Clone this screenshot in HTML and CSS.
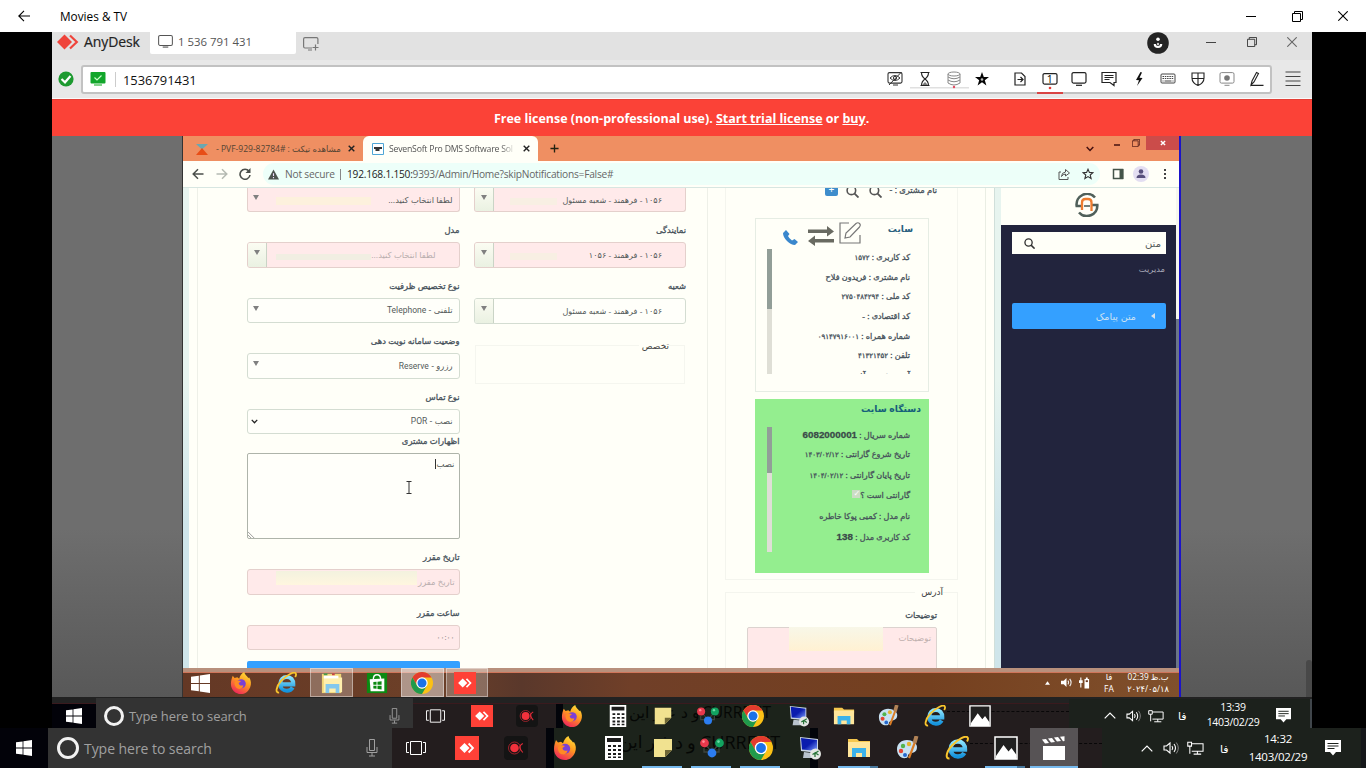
FILE: index.html
```html
<!DOCTYPE html>
<html lang="en">
<head>
<meta charset="utf-8">
<title>Movies &amp; TV</title>
<link rel="stylesheet" href="styles.css">
</head>
<body>
<svg class="defs" aria-hidden="true">
  <defs>
    <linearGradient id="gFox" x1="0.8" y1="0" x2="0.3" y2="1"><stop offset="0" stop-color="#ffe23c"/><stop offset=".45" stop-color="#ff9a1f"/><stop offset="1" stop-color="#f0245c"/></linearGradient>
    <linearGradient id="gIe" x1="0" y1="0" x2="0" y2="1"><stop offset="0" stop-color="#8be4ff"/><stop offset="1" stop-color="#1593dc"/></linearGradient>
    <linearGradient id="gScr" x1="0" y1="0" x2="1" y2="1"><stop offset="0" stop-color="#0a1cae"/><stop offset=".5" stop-color="#0a1cae"/><stop offset="1" stop-color="#7fa0ff"/></linearGradient>
  </defs>
  <symbol id="win" viewBox="0 0 16 16"><path fill="#fff" d="M0 2.3 6.6 1.4V7.6H0zM7.4 1.3 16 0V7.6H7.4zM0 8.4H6.6V14.6L0 13.7zM7.4 8.4H16V16L7.4 14.8z"/></symbol>
  <symbol id="anydesk" viewBox="0 0 24 24"><path fill="#ff4137" d="M0 0h24v24H0z"/><path fill="#fff" d="M9.5 7 14.5 12 9.5 17 4.5 12z"/><path fill="none" stroke="#fff" stroke-width="1.8" d="M13.6 7.5 18 12l-4.4 4.5"/></symbol>
  <symbol id="rec" viewBox="0 0 24 24"><rect width="24" height="24" rx="4" fill="#141414"/><circle cx="10.500" cy="12" r="6" fill="none" stroke="#b0242e" stroke-width=".9"/><circle cx="10.500" cy="12" r="4.300" fill="#f2313c"/><path d="M18.800 7.500Q15 10 15.800 12T18.800 16.500" fill="none" stroke="#e02b38" stroke-width="1.100"/></symbol>
  <symbol id="firefox" viewBox="0 0 24 24"><path fill="url(#gFox)" d="M3 4l2 2.6 3-.8 2 1.5C11 4 12.500 1.500 15.500 0c.5 3 3 4 4.500 6.500L21 6c2 3 2.500 7 1 10.500C20 21.500 16 24 12 24 6 24 1 19.500 1 13 1 9.500 2 6.500 3 4z"/><circle cx="12.200" cy="12.800" r="5" fill="#7b3fd6"/><path fill="#ff8a24" d="M5 11c2-2.500 5-2 7-1l-2.500 2c0 2 2 3.500 5 2.500 0 2-2 4.500-5.500 3.800C6 17.500 4.500 14 5 11z"/></symbol>
  <symbol id="calc" viewBox="0 0 24 24"><path fill="#fff" d="M3 0h18v24H3z"/><path fill="#1c1c1c" d="M5 2h14v4H5zM6 9h3v2H6zM11 9h3v2h-3zM16 9h3v2h-3zM6 13h3v2H6zM11 13h3v2h-3zM16 13h3v2h-3zM6 17h3v2H6zM11 17h3v2h-3zM16 17h3v2h-3zM6 20.500h3v1.500H6zM11 20.500h3v1.500h-3zM16 20.500h3v1.500h-3z"/></symbol>
  <symbol id="note" viewBox="0 0 24 24"><path fill="#f1e290" d="M3 3h18v11l-7 7H3z"/><path fill="#6e6635" d="M14 14h7l-7 7z"/></symbol>
  <symbol id="nodes" viewBox="0 0 24 24"><path fill="none" stroke="#3d443e" stroke-width="1.300" d="M4.500 7.500 12 16l7.500-8.500M4 12v4h15v-4"/><circle cx="4.500" cy="7" r="4.400" fill="#e8394c"/><circle cx="19.500" cy="7" r="4.400" fill="#12a360"/><circle cx="12" cy="17" r="4.400" fill="#2c7df0"/><circle cx="3.500" cy="5.600" r="1.300" fill="#ff8b95"/><circle cx="18.500" cy="5.600" r="1.300" fill="#6bdca5"/></symbol>
  <symbol id="chrome" viewBox="0 0 24 24"><circle cx="12" cy="12" r="12" fill="#fbc116"/><path fill="#e33b2e" d="M1.600 6A12 12 0 0 1 22.400 6H12A6 6 0 0 0 6.800 15z"/><path fill="#209a4c" d="M1.600 6A12 12 0 0 0 12 24l5.200-9A6 6 0 0 1 6.800 15z"/><circle cx="12" cy="12" r="6.200" fill="#fff"/><circle cx="12" cy="12" r="4.900" fill="#1b72e8"/></symbol>
  <symbol id="rdp" viewBox="0 0 24 24"><path fill="#c9d5e3" d="M2 1 20 3v14L3 15z"/><path fill="url(#gScr)" d="M3 2 19 4v11L4 13.500z"/><path fill="#b8c3cd" d="M6 16l8 1 2 5H5z"/><circle cx="17.500" cy="18" r="5.500" fill="#e3e6e3"/><path d="M14.500 18.500l2.500-1.500v4M20.500 15l-3 2 3 2" fill="none" stroke="#297539" stroke-width="1.300"/></symbol>
  <symbol id="folder" viewBox="0 0 24 24"><path fill="#f5c74e" d="M1 3h9l2 2h11v4H1z"/><path fill="#ffe69b" d="M1 6h22v15H1z"/><path fill="#3bb2ea" d="M5 12h14v9h-4v-4H9v4H5z"/></symbol>
  <symbol id="paint" viewBox="0 0 24 24"><path fill="#c8e1f2" d="M11 4C5 4 1 8 1 13c0 6 4 10 9 9 3-.6 1-3 3-4 3-1.500 8-1 8-7 0-4-5-7-10-7z"/><circle cx="7" cy="10" r="2.200" fill="#53b34c"/><circle cx="13" cy="8" r="2.200" fill="#e5b330"/><circle cx="5" cy="15" r="2.200" fill="#e34332"/><circle cx="9" cy="19" r="2" fill="#2467ce"/><path stroke="#d97c25" stroke-width="2.200" d="M19 6 13 22"/><path stroke="#b18256" stroke-width="4" d="M20.500 0 18.500 7"/></symbol>
  <symbol id="ie" viewBox="0 0 24 24"><path fill="none" stroke="url(#gIe)" stroke-width="4.400" d="M6.500 13.500H20c.2-5-3-8-7-8s-7.300 3-7.300 7.500S9 20.500 13 20.500c3 0 5-1.200 6.300-3.500"/><path fill="none" stroke="#f9c52d" stroke-width="2" d="M4.500 22.500C0 23 1 16 7 9.500 13 3 21-1 22.600 1.500c.8 1.200 0 3-.6 4"/></symbol>
  <symbol id="photo" viewBox="0 0 24 24"><path fill="#202020" stroke="#fff" stroke-width="1.500" d="M1 1h22v22H1z"/><path fill="#fff" d="M2 20l7.500-11 5 6.500L17.500 12l5 7v4H2z"/></symbol>
  <symbol id="movie" viewBox="0 0 24 24"><path fill="#fff" d="M1 10h22v14H1zM0 3.500 4 3l3 4-4 .5zM6 2.500 10 2l3 4-4 .5zM12 1.500 16 1l3 4-4 .5zM18 .8 22.500.2V5l-1.500.3z"/></symbol>
  <symbol id="task" viewBox="0 0 20 14"><path fill="none" stroke="#fff" d="M4.500.5h11v13h-11zM3 1.500H.5v10H3M17 1.500h2.500v10H17"/></symbol>
  <symbol id="mic" viewBox="0 0 12 18"><path fill="none" stroke="#a0a0a0" d="M3.500.5h5v11h-5zM1 8v5.500h10V8M6 14v3M3 17h6"/></symbol>
  <symbol id="sound" viewBox="0 0 16 14"><path fill="none" stroke="#fff" stroke-width="1.100" d="M1 5h2.500L7 2v10L3.500 9H1zM9 5q1.500 2 0 4M11 3q3 4 0 8"/><path fill="none" stroke="#888" d="M13.300 1.500q4 5.500 0 11"/></symbol>
  <symbol id="net" viewBox="0 0 18 14"><path fill="none" stroke="#fff" stroke-width="1.100" d="M5 2.500h12v8H5M11 10.500v3M7 13.500h8M.8 1h4v4h-4zM3 5v8"/></symbol>
  <symbol id="chat" viewBox="0 0 16 16"><path fill="#fff" d="M0 0h16v12h-5l-3 3.500L5 12H0z"/><path stroke="#1c211c" d="M2.500 3.500h11M2.500 6h11M2.500 8.500h7"/></symbol>
  <symbol id="mag" viewBox="0 0 14 14"><circle cx="5.800" cy="5.800" r="4.600" fill="none" stroke="currentColor" stroke-width="1.700"/><path stroke="currentColor" stroke-width="2" d="M9 9l4.500 4.500"/></symbol>
  <symbol id="restore" viewBox="0 0 11 11"><path fill="none" stroke="currentColor" d="M.5 2.500h8v8h-8zM2.500 2.500v-2h8v8h-2"/></symbol>
  <symbol id="close" viewBox="0 0 10 10"><path stroke="currentColor" stroke-width="1.100" d="M.3.300l9.400 9.400M9.700.300.300 9.700"/></symbol>
  <symbol id="screen" viewBox="0 0 16 14"><rect x=".6" y=".6" width="14.800" height="10.600" rx="1.500" fill="none" stroke="currentColor" stroke-width="1.100"/><path stroke="currentColor" stroke-width="1.200" d="M5 13h6"/></symbol>
</svg>

<header class="app-title">
  <svg class="back" viewBox="0 0 12 12"><path fill="none" stroke="#000" stroke-width="1.100" d="M12 6H.8M6 .8.800 6 6 11.200"/></svg>
  <span class="app-name">Movies &amp; TV</span>
  <svg class="w-min" viewBox="0 0 10 10"><path stroke="#000" d="M0 5.500h10"/></svg>
  <svg class="w-res"><use href="#restore"/></svg>
  <svg class="w-close"><use href="#close"/></svg>
</header>

<main class="stage">
 <div class="anydesk">
  <div class="ad-tabs">
    <svg class="ad-logo" viewBox="0 0 22 16"><path fill="#ef443b" d="M7.500.500 15 8 7.500 15.500 0 8z"/><path fill="none" stroke="#ef443b" stroke-width="2.200" d="M13 1.500 19.800 8 13 14.500"/></svg>
    <span class="ad-name">AnyDesk</span>
    <div class="ad-tab"><svg class="ic-screen"><use href="#screen"/></svg><span>1 536 791 431</span></div>
    <svg class="ad-new" viewBox="0 0 16 14"><path fill="none" stroke="#777" stroke-width="1.200" d="M9 11H2Q.6 11 .6 9.500V2Q.6.600 2 .6h11.500q1.400 0 1.400 1.400v5M5 13h4M12.500 7.500v6M9.500 10.500h6"/></svg>
    <svg class="ad-user" viewBox="0 0 22 22"><circle cx="11" cy="11" r="10.800" fill="#242424"/><circle cx="11" cy="7.200" r="1.800" fill="#fff"/><circle cx="11" cy="12" r="1.200" fill="#ccc"/><path fill="none" stroke="#fff" stroke-width="2.200" d="M7.800 12q0 3 3.200 3t3.200-3"/></svg>
    <svg class="ad-min" viewBox="0 0 10 10"><path stroke="#444" d="M0 5.500h10"/></svg>
    <svg class="ad-res"><use href="#restore"/></svg>
    <svg class="ad-close"><use href="#close"/></svg>
  </div>
  <div class="ad-bar">
    <svg class="ad-ok" viewBox="0 0 16 16"><circle cx="8" cy="8" r="7.600" fill="#1d9a30"/><path fill="none" stroke="#fff" stroke-width="2.200" d="M3.500 8 7 11.300 12.500 5"/></svg>
    <div class="ad-address">
      <svg class="ad-conn" viewBox="0 0 16 14"><rect x=".5" width="15" height="11.500" rx="1" fill="#12a62b"/><path fill="none" stroke="#c9ffc9" stroke-width="1.200" d="M4.500 5.500 7 8l4.500-4.500"/><path stroke="#5bc465" stroke-width="1.500" d="M4 13h8"/></svg>
      <i class="sep"></i>
      <span class="ad-id">1536791431</span>
      <div class="ad-tools">
        <svg viewBox="0 0 16 16"><rect x="1" y="1.600" width="14" height="10.500" rx="1.500" fill="none" stroke="#333" stroke-width="1.100"/><path fill="none" stroke="#333" d="M3 7q5-5 10 0-5 5-10 0M6 14h5M2 14 14.500 1"/><circle cx="8" cy="7" r="1.600" fill="none" stroke="#333"/></svg>
        <svg class="under" viewBox="0 0 16 16"><path stroke="#e0e0e0" stroke-width="1.500" d="M-7 16.700h59"/><path fill="none" stroke="#222" stroke-width="1.100" d="M3.500 1.500h9M3.500 14.500h9M4.500 1.500q0 4 3.500 6.500 3.500-2.500 3.500-6.500M4.500 14.500q0-4 3.500-6.500 3.500 2.500 3.500 6.500"/><path fill="#777" d="M8 11l3 3H5z"/></svg>
        <svg viewBox="0 0 16 16"><path fill="none" stroke="#888" d="M2 3v9q6 4 12 0V3M2 6q6 3.500 12 0M2 9q6 3.500 12 0"/><ellipse cx="8" cy="3" rx="6" ry="2" fill="none" stroke="#888"/><circle cx="8" cy="16" r="1.200" fill="#e54b62"/></svg>
        <svg viewBox="0 0 16 16"><path fill="#050505" d="M8 1l1.800 5H15l-4.200 3.200 1.600 5.300L8 11.300l-4.400 3.200 1.600-5.300L1 6h5.200z"/><circle cx="8" cy="8.500" r="1.300" fill="#bbb"/></svg>
        <i class="gap"></i>
        <svg viewBox="0 0 16 16"><path fill="none" stroke="#222" stroke-width="1.200" d="M3 2h6.500L13 5.500V14H3zM5.500 8.500H11M8.500 6 11 8.500 8.500 11"/></svg>
        <div class="tool-on"><svg viewBox="0 0 16 16"><rect x="1" y="1.600" width="14" height="10.500" rx="1.500" fill="none" stroke="#222" stroke-width="1.200"/><circle cx="8" cy="16" r="1.300" fill="#e53935"/></svg><span>1</span></div>
        <svg viewBox="0 0 16 16"><rect x="1" y="1.600" width="14" height="10.500" rx="1.500" fill="none" stroke="#222" stroke-width="1.200"/><path stroke="#222" stroke-width="1.200" d="M5 14.300h6"/></svg>
        <svg viewBox="0 0 16 16"><path fill="none" stroke="#222" stroke-width="1.200" d="M1 1.500h14v10h-2v3l-4-3H1zM3.500 4.500h9M3.500 6.500h9M3.500 8.500h5"/></svg>
        <svg viewBox="0 0 16 16"><path fill="#111" d="M9.500 1 5 9l3 .2L6 15l5.500-8-3-.3L11 1.500z"/></svg>
        <svg viewBox="0 0 16 16"><rect x="1" y="3" width="14" height="9" rx="1" fill="none" stroke="#444"/><path stroke="#444" stroke-dasharray="1.500 .8" d="M2.500 5.500h11M2.500 7.500h11"/><path stroke="#444" d="M4.500 10h7M2.500 10h1M12.500 10h1"/></svg>
        <svg viewBox="0 0 16 16"><path fill="none" stroke="#222" stroke-width="1.100" d="M2 2h12v5q0 5-6 7.500Q2 12 2 7zM8 1.500v13M2 7.500h12"/></svg>
        <svg viewBox="0 0 16 16"><rect x="1" y="1.600" width="14" height="10.500" rx="1.500" fill="none" stroke="#888"/><circle cx="8" cy="7" r="2.800" fill="#777"/><path stroke="#888" d="M5.500 14.300h5"/></svg>
        <svg viewBox="0 0 16 16"><path fill="none" stroke="#222" stroke-width="1.100" d="M2 14.400h12.500M2 14l1-4L7.500 1.500l2 1L5 11z"/></svg>
      </div>
    </div>
    <svg class="ad-menu" viewBox="0 0 16 16"><path stroke="#444" stroke-width="1.200" d="M.5 1h15M.5 5.500h15M.5 10h15M.5 14.500h15"/></svg>
  </div>
  <div class="license"><p>Free license (non-professional use). <u>Start trial license</u> or <u>buy</u>.</p></div>

  <div class="view">
   <div class="remote">
    <div class="ch-tabs">
      <div class="tab-a">
        <svg class="fav" viewBox="0 0 12 12"><path fill="#6aa7b2" d="M0 1h12L6 6.500z"/><path fill="#e84d17" d="M0 12h12L6 5z"/></svg>
        <span class="dash">-</span><span class="tab-t">PVF-929-82784# : <span dir="rtl">مشاهده تیکت</span></span>
        <svg class="x" viewBox="0 0 10 10"><path stroke="#222" stroke-width="2" d="M1 1l8 8M9 1 1 9"/></svg>
      </div>
      <div class="tab-b">
        <svg class="fav" viewBox="0 0 12 12"><path fill="#fff" stroke="#4fa6d6" d="M.5.500h11v11H.500z"/><path stroke="#333" stroke-width="1.800" d="M2 5h8M3.500 7h4"/></svg>
        <span class="tab-t">SevenSoft Pro DMS Software Sol</span>
        <svg class="x" viewBox="0 0 10 10"><path stroke="#222" stroke-width="2" d="M1 1l8 8M9 1 1 9"/></svg>
      </div>
      <svg class="plus" viewBox="0 0 10 10"><path stroke="#221" stroke-width="1.500" d="M5 .500v9M.500 5h9"/></svg>
      <svg class="chev" viewBox="0 0 8 6"><path fill="none" stroke="#411" stroke-width="1.500" d="M.7 1 4 4.500 7.300 1"/></svg>
      <svg class="cmin" viewBox="0 0 8 8"><path stroke="#411" stroke-width="1.500" d="M1 5h6"/></svg>
      <svg class="cres"><use href="#restore"/></svg>
      <div class="cclose"><svg viewBox="0 0 10 10"><path stroke="#fff" stroke-width="2.400" d="M1.500 1.500l7 7M8.500 1.500l-7 7"/></svg></div>
    </div>
    <div class="ch-bar">
      <svg class="nav1" viewBox="0 0 12 12"><path fill="none" stroke="#4b4f4b" stroke-width="1.500" d="M11.500 6H1.500M6 1.200 1.200 6 6 10.800"/></svg>
      <svg class="nav2" viewBox="0 0 12 12"><path fill="none" stroke="#b5bab2" stroke-width="1.500" d="M.5 6h10M6 1.200 10.800 6 6 10.800"/></svg>
      <svg class="nav3" viewBox="0 0 12 12"><path fill="none" stroke="#4b4f4b" stroke-width="1.600" d="M10 3.200A5 5 0 1 0 11 7"/><path fill="#4b4f4b" d="M11.500 0v5h-5z"/></svg>
      <div class="url">
        <svg class="warn" viewBox="0 0 12 11"><path fill="#4d544f" d="M6 0l6 11H0z"/><path stroke="#edf" stroke-width="1.200" d="M6 4v3M6 8.300v1.200"/></svg>
        <span class="ns">Not secure</span><i></i><span class="u"><b>192.168.1.150:</b>9393/Admin/Home?skipNotifications=False#</span>
        <svg class="share" viewBox="0 0 12 12"><path fill="none" stroke="#555" d="M3 4H1v7.500h9V9M3.500 8.500q0-4 4-4.500V1.500L11.500 5 7.500 8V6Q5 6 3.500 8.500"/></svg>
        <svg class="star" viewBox="0 0 12 12"><path fill="none" stroke="#333" stroke-width="1.100" d="M6 1.200l1.400 3.200 3.500.3-2.700 2.300.9 3.500L6 8.600 2.900 10.500l.9-3.500L1.100 4.700l3.500-.3z"/></svg>
      </div>
      <svg class="panel" viewBox="0 0 12 12"><path fill="none" stroke="#445449" stroke-width="1.500" d="M1.500 1.500h9v9h-9z"/><path fill="#445449" d="M7.500 1h4v10h-4z"/></svg>
      <svg class="avatar" viewBox="0 0 16 16"><circle cx="8" cy="8" r="8" fill="#e3def2"/><circle cx="8" cy="5.500" r="2.300" fill="#574f7c"/><path fill="#574f7c" d="M3.500 12q0-3.500 4.500-3.500t4.500 3.500z"/></svg>
      <svg class="dots" viewBox="0 0 4 12"><path fill="#444" d="M1 1h2v2H1zM1 5h2v2H1zM1 9h2v2H1z"/></svg>
    </div>

    <div class="page" dir="rtl">
      <i class="side-scroll"></i>
      <aside class="side">
        <div class="side-head"><svg viewBox="0 0 24 24"><path fill="none" stroke="#50605a" stroke-width="2.600" d="M20 4.500A10.500 10.500 0 0 0 1.700 13H8M4 19.500A10.500 10.500 0 0 0 22.300 12H16"/><path fill="none" stroke="#ee7c30" stroke-width="2.300" d="M7 17V9.500Q7 6 10.500 6h2.500q3.500 0 3.500 3.500V18"/><path stroke="#50605a" stroke-width="1.600" d="M9 13h6"/></svg></div>
        <div class="side-search"><span>متن</span><svg><use href="#mag"/></svg></div>
        <p class="side-label">مدیریت</p>
        <div class="side-btn"><svg viewBox="0 0 4 6"><path fill="#d5e2ee" d="M4 0v6L0 3z"/></svg><span>متن پیامک</span></div>
      </aside>
      <i class="strip"></i>
      <div class="content">
        <section class="customer">
          <div class="group g1">
            <div class="cust-top"><span class="lbl">نام مشتری : -</span><svg class="m1"><use href="#mag"/></svg><svg class="m2"><use href="#mag"/></svg><i>+</i></div>
            <div class="card">
              <div class="card-head"><b>سایت</b>
                <svg class="edit" viewBox="0 0 22 22"><path fill="none" stroke="#777" stroke-width="1.200" d="M10 1H1v20h20v-8M6 16l1-5L17 1.500q2-1.500 3.500 0t0 3.500L11 15z"/></svg>
                <svg class="swap" viewBox="0 0 26 20"><path fill="#696a61" d="M0 3.500h19V0l7 5.500-7 5V7H0zM26 13H7V9.500L0 15l7 5v-3.500h19z"/></svg>
                <svg class="phone" viewBox="0 0 15 15"><path fill="#3a87cd" d="M3 0 0 3q0 4 4 8t8 4l3-3-3.500-3-2.500 1.500Q6 8.500 5 6l1.500-2z"/></svg>
              </div>
              <div class="card-body"><ul>
                <li>کد کاربری : <b class="d">۱۵۷۲</b></li><li>نام مشتری : فریدون فلاح</li><li>کد ملی : <b class="d">۲۷۵۰۴۸۴۲۹۴</b></li><li>کد اقتصادی : -</li><li>شماره همراه : <b class="d">۰۹۱۴۷۹۱۶۰۰۱</b></li><li>تلفن : <b class="d">۴۱۳۲۱۴۵۲</b></li><li class="cut">آدرس : تبریز آذ</li>
              </ul><i class="sb"><b></b></i></div>
            </div>
            <div class="card green">
              <div class="card-head"><b>دستگاه سایت</b></div>
              <div class="card-body"><ul>
                <li>شماره سریال : <b class="num">6082000001</b></li><li>تاریخ شروع گارانتی : <b class="d">۱۴۰۳/۰۲/۱۲</b></li><li>تاریخ پایان گارانتی : <b class="d">۱۴۰۴/۰۲/۱۲</b></li><li>گارانتی است ؟<em>✓</em></li><li>نام مدل : کمبی پوکا خاطره</li><li>کد کاربری مدل : <b class="num">138</b></li>
              </ul><i class="sb"><b></b></i></div>
            </div>
          </div>
          <div class="group g2">
            <span class="legend">آدرس</span>
            <label class="lbl">توضیحات</label>
            <div class="ta"><span>توضیحات</span><i></i></div>
          </div>
        </section>
        <section class="form">
          <div class="col b">
            <div class="combo pink first"><span>۱۰۵۶ - فرهمند - شعبه مسئول</span><i class="smear s"></i><i class="dd"></i></div>
            <label>نمایندگی</label>
            <div class="combo pink"><span>۱۰۵۶ - فرهمند - ۱۰۵۶</span><i class="smear s"></i><i class="dd"></i></div>
            <label>شعبه</label>
            <div class="combo"><span>۱۰۵۶ - فرهمند - شعبه مسئول</span><i class="dd"></i></div>
            <div class="skill"><span>تخصص</span></div>
          </div>
          <div class="col a">
            <div class="sel pink first"><span>لطفا انتخاب کنید...</span><i class="smear y"></i><i class="tri"></i></div>
            <label>مدل</label>
            <div class="combo pink dis"><span>لطفا انتخاب کنید...</span><i class="smear l"></i><i class="dd"></i></div>
            <label>نوع تخصیص ظرفیت</label>
            <div class="sel"><span>تلفنی - <q>Telephone</q></span><i class="tri"></i></div>
            <label>وضعیت سامانه نوبت دهی</label>
            <div class="sel"><span>رزرو - <q>Reserve</q></span><i class="tri"></i></div>
            <label>نوع تماس</label>
            <div class="sel"><span>نصب - <q>POR</q></span><svg class="dchev" viewBox="0 0 8 6"><path fill="none" stroke="#222" stroke-width="1.500" d="M.7 1 4 4.500 7.300 1"/></svg></div>
            <label class="tight">اظهارات مشتری</label>
            <div class="area"><span>نصب</span><svg class="ibeam" viewBox="0 0 6 13"><path fill="none" stroke="#333" d="M.5.500h5M.500 12.500h5M3 .500v12"/></svg><svg class="grip" viewBox="0 0 8 8"><path stroke="#777" stroke-width=".8" d="M0 1l7 7M0 4.500 3.500 8"/></svg></div>
            <label>تاریخ مقرر</label>
            <div class="sel pink dis"><span>تاریخ مقرر</span><i class="smear d"></i></div>
            <label>ساعت مقرر</label>
            <div class="sel pink time"><span>۰۰:۰۰</span></div>
            <div class="submit"></div>
          </div>
        </section>
      </div>
      <i class="strip left"></i>
    </div>

    <div class="w8bar">
      <div class="w8 start"><svg><use href="#win"/></svg></div>
      <div class="w8"><svg><use href="#firefox"/></svg></div>
      <div class="w8"><svg><use href="#ie"/></svg></div>
      <div class="w8 open"><svg viewBox="0 0 24 24"><path fill="#f1d676" d="M1 2h21v21H1z"/><path fill="#ffefad" d="M3 6h20v16H3z"/><path fill="#fff" d="M3 4h16v3H3z"/><path stroke="#4b9b4b" stroke-width="2" d="M3 2.500h4"/><path stroke="#c44" stroke-width="2" d="M12 2.500h3"/><path fill="#83c8ed" d="M5 13h15v10h-4v-5H9v5H5z"/></svg></div>
      <div class="w8"><svg viewBox="0 0 24 24"><path fill="#0c8a12" d="M1 1h22v22H1z"/><path fill="#fff" d="M4 8l16-1v14H5z"/><path fill="none" stroke="#fff" stroke-width="1.500" d="M8 8q0-5 4-5t4 5"/><path fill="#0c8a12" d="M8 11l3.500-.4V14H8zM12.500 10.500 17 10v4h-4.500zM8 15h3.500v3.400L8 18zM12.500 15H17v4l-4.500-.5z"/></svg></div>
      <div class="w8 open on"><svg><use href="#chrome"/></svg></div>
      <div class="w8 open grp"><svg><use href="#anydesk"/></svg></div>
      <div class="w8tray">
        <svg class="up" viewBox="0 0 6 4"><path fill="#fff" d="M3 0l3 4H0z"/></svg>
        <svg class="snd" viewBox="0 0 12 12"><path fill="#fff" d="M0 4h3l3-3v10L3 8H0z"/><path fill="none" stroke="#eee" stroke-width="1.200" d="M7.500 4q1.500 2 0 4M9.500 2q3 4 0 8"/></svg>
        <svg class="bat" viewBox="0 0 12 12"><path fill="#fff" d="M6 1.500h5V12H6zM7.500 0h2v1.500h-2zM0 3h4v3H0z"/><path fill="#6b3a22" d="M7.300 3h2.400v2H7.300z"/><path stroke="#fff" stroke-width="1.200" d="M2 0v11"/></svg>
        <div class="lang"><span>فا</span><span>FA</span></div>
        <div class="clk"><span dir="rtl">ب.ظ 02:39</span><span>۲۰۲۴/۰۵/۱۸</span></div>
      </div>
    </div>
   </div>
   <i class="ad-scroll"></i>
  </div>

  <div class="bar inner">
    <div class="b-start"><svg><use href="#win"/></svg></div>
    <div class="b-search"><i class="ring"></i><span>Type here to search</span><svg><use href="#mic"/></svg></div>
    <div class="b-task"><svg><use href="#task"/></svg></div>
    <div class="b-ghost"><span class="g-a">غیر این</span><span class="g-b">د</span><span class="g-c">و</span><span class="g-d">CURRENT</span></div>
    <div class="b-apps">
      <div><svg><use href="#anydesk"/></svg></div><div><svg><use href="#rec"/></svg></div><div><svg><use href="#firefox"/></svg></div><div><svg><use href="#calc"/></svg></div><div><svg><use href="#note"/></svg></div><div><svg><use href="#nodes"/></svg></div><div><svg><use href="#chrome"/></svg></div><div><svg><use href="#rdp"/></svg></div><div><svg><use href="#folder"/></svg></div><div><svg><use href="#paint"/></svg></div><div><svg><use href="#ie"/></svg></div><div><svg><use href="#photo"/></svg></div>
    </div>
    <div class="b-tray">
      <svg class="t-up" viewBox="0 0 12 7"><path fill="none" stroke="#fff" stroke-width="1.200" d="M.7 6.300 6 1l5.300 5.300"/></svg>
      <svg class="t-snd"><use href="#sound"/></svg><svg class="t-net"><use href="#net"/></svg><span class="t-fa">فا</span>
      <div class="t-clk"><span>13:39</span><span>1403/02/29</span></div>
      <svg class="t-chat"><use href="#chat"/></svg>
    </div>
  </div>
 </div>
</main>

<footer class="bar outer">
    <div class="b-start"><svg><use href="#win"/></svg></div>
    <div class="b-search"><i class="ring"></i><span>Type here to search</span><svg><use href="#mic"/></svg></div>
    <div class="b-task"><svg><use href="#task"/></svg></div>
    <div class="b-ghost"><span class="g-a">غیر این</span><span class="g-b">د</span><span class="g-c">و</span><span class="g-d">CURRENT</span></div>
    <div class="b-apps">
      <div><svg><use href="#anydesk"/></svg></div><div><svg><use href="#rec"/></svg></div><div><svg><use href="#firefox"/></svg></div><div><svg><use href="#calc"/></svg></div><div class="run"><svg><use href="#note"/></svg></div><div class="run"><svg><use href="#nodes"/></svg></div><div class="run"><svg><use href="#chrome"/></svg></div><div><svg><use href="#rdp"/></svg></div><div class="run multi"><svg><use href="#folder"/></svg></div><div><svg><use href="#paint"/></svg></div><div><svg><use href="#ie"/></svg></div><div class="run multi"><svg><use href="#photo"/></svg></div><div class="run active"><svg><use href="#movie"/></svg></div>
    </div>
    <div class="b-tray">
      <svg class="t-up" viewBox="0 0 12 7"><path fill="none" stroke="#fff" stroke-width="1.200" d="M.7 6.300 6 1l5.300 5.300"/></svg>
      <svg class="t-snd"><use href="#sound"/></svg><svg class="t-net"><use href="#net"/></svg><span class="t-fa">فا</span>
      <div class="t-clk"><span>14:32</span><span>1403/02/29</span></div>
      <svg class="t-chat"><use href="#chat"/></svg>
    </div>
</footer>
</body>
</html>
```
FILE: styles.css
```css
* { box-sizing: border-box; margin: 0; padding: 0; }
body { width: 1366px; height: 768px; overflow: hidden; background: #000; display: flex; flex-direction: column; font-family: "Open Sans", "Noto Sans", "DejaVu Sans", sans-serif; color: #000; }
svg { display: block; flex: none; }
i, em { font-style: normal; }
span { white-space: nowrap; }
.defs { position: absolute; width: 0; height: 0; }

/* Player title bar */
.app-title { height: 32px; flex: none; background: #fff; display: flex; align-items: center; padding: 0 18px; }
.back { width: 12px; height: 12px; }
.app-name { font-size: 11.800px; margin-left: 30px; flex: 1; padding-bottom: 1px; }
.w-min { width: 10px; height: 10px; margin-right: 36px; }
.w-res { width: 11px; height: 11px; margin-right: 35px; }
.w-close { width: 10px; height: 10px; }

.stage { height: 696px; flex: none; padding: 0 54px 0 52px; background: #000; }
.anydesk { width: 1260px; height: 696px; display: flex; flex-direction: column; }

/* AnyDesk chrome */
.ad-tabs { height: 28px; flex: none; background: #e2e2e2; display: flex; align-items: flex-start; padding: 0 15px 0 5px; }
.ad-logo { width: 22px; height: 16px; margin-top: 2px; }
.ad-name { font-size: 14px; line-height: 20px; color: #222; margin-left: 5px; width: 66px; letter-spacing: -.1px; -webkit-text-stroke: .2px #222; }
.ad-tab { width: 146px; height: 22px; background: #fff; border-radius: 0 0 2px 2px; display: flex; align-items: center; padding: 0 0 3px 8px; color: #555; }
.ad-tab svg { width: 15px; height: 13px; color: #555; }
.ad-tab span { font-size: 11.400px; margin-left: 5px; }
.ad-new { width: 16px; height: 14px; margin: 5px 0 0 7px; }
.ad-user { width: 22px; height: 22px; margin: 0 37px 0 auto; }
.ad-min { width: 10px; height: 10px; margin: 5px 31px 0 0; }
.ad-res { width: 10px; height: 10px; margin: 5px 30px 0 0; color: #333; }
.ad-close { width: 10px; height: 10px; margin-top: 5px; color: #666; }
.ad-bar { height: 39px; flex: none; background: #e8e8e8; border-bottom: 1px solid #fafafa; display: flex; align-items: center; padding: 0 11px 0 6px; }
.ad-ok { width: 16px; height: 16px; }
.ad-address { width: 1191px; height: 29px; margin-left: 7px; background: #fff; border: 2px solid #c2c2c2; border-radius: 3px; display: flex; align-items: center; padding-left: 7px; }
.ad-conn { width: 16px; height: 14px; }
.sep { width: 1px; height: 15px; background: #ccc; margin: 0 7px 0 9px; }
.ad-id { font-size: 12.900px; line-height: 18px; color: #111; padding-top: 1px; }
.ad-tools { margin-left: auto; display: flex; gap: 13.600px; padding-right: 5px; align-items: center; }
.ad-tools > svg, .tool-on svg { width: 16px; height: 16px; overflow: visible; }
.ad-tools .gap { width: 0; margin-left: -5px; }
.ad-tools svg:nth-child(4) { margin-left: -2px; }
.tool-on { position: relative; width: 16px; height: 25px; padding-top: 5px; }
.tool-on span { position: absolute; left: 5px; top: 5px; font-size: 10.500px; line-height: 14px; font-family: "Open Sans", sans-serif; }
.tool-on::after { content: ""; position: absolute; left: -5px; bottom: -2px; width: 26px; height: 2px; background: #d94444; }
.ad-menu { width: 16px; height: 16px; margin-left: auto; }
.license { height: 37px; flex: none; background: #fb4237; border-top: 1px solid #e33f36; color: #fff; font-size: 12.500px; font-weight: 700; line-height: 37px; padding-left: 442px; white-space: nowrap; }
.license p { letter-spacing: -.02px; }

.view { height: 561px; flex: none; background: linear-gradient(#6e6e6e 0, #6e6e6e 70%, #585858 100%); padding-left: 130px; position: relative; }
.remote { width: 999px; height: 561px; border-left: 1px solid #333; border-right: 2px solid #1b13c9; display: flex; flex-direction: column; background: #fffff8; }
.ad-scroll { position: absolute; right: 0; bottom: -7px; width: 6px; height: 44px; background: #484848; border-radius: 4px; }

/* Browser */
.ch-tabs { height: 25px; flex: none; background: #ef8f62; display: flex; align-items: flex-start; }
.tab-a { width: 180px; height: 25px; display: flex; align-items: center; padding-left: 13px; color: #543; }
.fav { width: 12px; height: 12px; }
.tab-a .dash { font-size: 9px; margin-left: 8px; width: 5px; }
.tab-t { font-size: 8.700px; letter-spacing: -.22px; line-height: 16px; }
.tab-a .tab-t { font-size: 8.600px; letter-spacing: -.05px; font-family: "Open Sans", "DejaVu Sans", sans-serif; }
.x { width: 7px; height: 7px; margin-left: auto; margin-right: 8px; }
.tab-b { width: 175px; height: 25px; background: #fffff8; border-radius: 6px 6px 0 0; display: flex; align-items: center; padding-left: 9px; color: #555; }
.tab-b .tab-t { margin-left: 5px; -webkit-mask-image: linear-gradient(90deg, #000 90%, rgba(0,0,0,.2)); mask-image: linear-gradient(90deg, #000 90%, rgba(0,0,0,.2)); }
.plus { width: 9px; height: 9px; margin: 8px 0 0 12px; }
.chev { width: 8px; height: 6px; margin: 10px 19px 0 auto; }
.cmin { width: 8px; height: 8px; margin: 4px 11px 0 0; }
.cres { width: 8px; height: 8px; margin: 3px 6px 0 0; color: #411; }
.cclose { width: 33px; height: 14px; background: #cb4c4a; display: flex; align-items: center; justify-content: center; }
.cclose svg { width: 6px; height: 6px; }
.ch-bar { height: 27px; flex: none; border-bottom: 1px solid #d7e6e1; background: #fffff8; display: flex; align-items: center; padding: 0 12px 0 9px; }
.nav1, .nav2, .nav3 { width: 12px; height: 12px; }
.nav2, .nav3 { margin-left: 12px; }
.nav3 { margin-left: 11px; }
.url { width: 837px; height: 22px; margin-left: 12px; border-radius: 11px; background: #edfff9; display: flex; align-items: center; font-size: 10.200px; color: #666; padding-left: 5px; }
.warn { width: 11px; height: 11px; }
.ns { margin-left: 6px; width: 50px; letter-spacing: -.2px; }
.url i { width: 1px; height: 11px; background: #888; margin: 0 6px 0 5px; }
.url b { font-weight: 400; color: #222; }
.u { letter-spacing: -.24px; }
.share { width: 12px; height: 12px; margin-left: auto; margin-right: 12px; }
.star { width: 12px; height: 12px; margin-right: 6px; }
.panel { width: 12px; height: 12px; margin-left: 12px; }
.avatar { width: 16px; height: 16px; margin-left: 9px; }
.dots { width: 4px; height: 12px; margin-left: auto; }

/* Service page */
.page { height: 480px; flex: none; overflow: hidden; display: flex; font-family: "Liberation Sans", "DejaVu Sans", sans-serif; font-size: 8.500px; color: #555b5b; }
.page > * { flex: none; }
.side-scroll { width: 3px; height: 480px; background: linear-gradient(#f6f6ee 0 131px, #6b7588 131px); }
.side { width: 175px; height: 480px; background: #22243d; }
.side-head { height: 37px; background: #fffff8; padding: 5px 77px 0 0; }
.side-head svg { width: 24px; height: 24px; }
.side-search { margin: 7px 10px 0 11px; height: 22px; background: #fffff8; display: flex; align-items: center; justify-content: space-between; padding: 0 5px 0 12px; font-size: 10px; }
.side-search svg { width: 11px; height: 11px; color: #333; }
.side-label { margin: 7px 11px 0; height: 16px; line-height: 16px; color: #aaabba; font-size: 8.300px; }
.side-btn { margin: 26px 10px 0 11px; height: 26px; border-radius: 2px; background: #34a0ff; color: #cfe3f3; display: flex; align-items: center; padding-right: 11px; font-size: 9.600px; }
.side-btn svg { width: 4px; height: 6px; margin-left: 15px; }
.strip { width: 7px; height: 480px; background: linear-gradient(#e7f4ef 0 40%, #cfe5ea 70%); border-left: 1px solid #d0dfda; }
.strip.left { width: 6px; border: 0; }
.content { width: 805px; height: 480px; background: #fffff8; display: flex; padding-right: 8px; }
.customer { width: 261px; height: 480px; padding: 0 27px 0 0; flex: none; border-right: 1px solid #eaeee4; }
.group { width: 233px; border: 1px solid #f4f5ee; }
.g1 { height: 392px; border-top: 0; }
.g2 { height: 88px; border-bottom: 0; margin-top: 12px; }
.cust-top { height: 30px; display: flex; align-items: flex-start; padding-right: 20px; }
.lbl, .col label, .card-body li { font-weight: 400; -webkit-text-stroke: .3px #47525b; color: #47525b; }
.lbl { font-size: 8.300px; line-height: 12px; }
.cust-top .lbl { margin-top: -4px; width: 49px; }
.cust-top svg { width: 13px; height: 13px; margin-top: -3px; color: #555; }
.cust-top .m1 { margin-right: 6px; }
.cust-top .m2 { margin-right: 10px; }
.cust-top i { width: 13px; height: 12px; margin: -4px 8px 0 0; background: #3e8dcc; color: #fff; text-align: center; line-height: 11px; font-size: 10px; border-radius: 2px; }
.card { width: 174px; height: 174px; margin: 0 28px 7px 0; border: 1px solid #e6ede4; }
.card-head { height: 30px; display: flex; padding: 3px 15px 0 0; }
.card-head b { font-size: 9px; color: #28607f; line-height: 15px; width: 52px; white-space: nowrap; }
.edit { width: 22px; height: 22px; }
.swap { width: 26px; height: 20px; margin: 4px 5px 0 0; }
.phone { width: 15px; height: 15px; margin: 8px 10px 0 0; }
.card-body { height: 125px; display: flex; overflow: hidden; justify-content: space-between; padding: 0 18px 0 11px; }
.card-body ul { list-style: none; margin-top: -1px; }
.card-body li { height: 19.700px; line-height: 19.700px; white-space: nowrap; font-size: 8.100px; }
.card-body .sb { width: 5px; height: 125px; background: #dfdfd6; }
.d { font-weight: 400; font-size: 7px; }
.sb b { display: block; width: 5px; height: 60px; background: #929e98; }
.card.green { background: #94ee8f; border-color: #94ee8f; margin-bottom: 0; }
.green .card-head { padding: 2px 7px 0 0; height: 27px; }
.green .card-head b { font-size: 9.200px; color: #16607a; }
.green li { height: 20.400px; line-height: 20.400px; }
.green .sb b { height: 46px; }
.green ul { margin-top: -2px; }
.num { font-size: 9.800px; color: #33493d; }
.green em { display: inline-block; width: 8px; height: 8px; line-height: 8px; font-size: 8px; background: #ccdcc5; color: #fff; vertical-align: 2px; -webkit-text-stroke: 0; }
.legend { display: block; width: 28px; margin: -8px 14px 0 0; line-height: 14px; font-size: 9px; background: #fffff8; color: #444; }
.g2 .lbl { display: block; margin: 10px 20px 0 0; }
.ta { position: relative; width: 190px; height: 60px; margin: 6px 20px 0 0; border: 1px solid #dcd3cf; border-radius: 2px; background: #ffe9e9; color: #bfb0ae; padding: 2px 5px; line-height: 16px; }
.ta i { position: absolute; left: 41px; top: -1px; width: 94px; height: 24px; background: linear-gradient(#f8f7e8, #fff1d2); }

.form { width: 511px; height: 480px; margin-right: 17px; border: solid #eef0e8; border-width: 0 1px; display: flex; padding-right: 21px; flex: none; }
.col { width: 212.500px; height: 480px; flex: none; }
.col.b { margin-left: 14px; }
.col label { display: block; height: 30px; padding-top: 11px; line-height: 14px; font-size: 8.400px; }
.col label.tight { height: 19px; padding-top: 0; }
.sel, .combo { position: relative; height: 25.500px; border: 1px solid #d4ddd2; border-radius: 3px; background: #fffffa; display: flex; align-items: center; padding: 0 6px; font-size: 8.400px; }
.combo { height: 26px; }
.a .combo { height: 25.500px; }
.combo span { padding-right: 17px; }
.b .combo { font-size: 8.100px; }
.sel.pink, .combo.pink { background: #ffeaea; border-color: #e4d0cc; }
.sel.first, .combo.first { height: 24px; border-top: 0; border-radius: 0 0 3px 3px; }
.dis { color: #b9aeae; }
.sel.dis, .sel.time { padding: 0 4px; }
.sel.time { font-size: 7.400px; }
.dd { position: absolute; left: 0; top: 0; width: 19px; height: 100%; border-right: 1px solid #cad4c6; background: linear-gradient(#fbfcf2, #eaf1e2); border-radius: 2px 0 0 2px; }
.dd::after, .tri { content: ""; position: absolute; left: 6px; top: 7px; border: 3px solid transparent; border-top: 5px solid #808080; border-bottom: 0; }
.tri { left: 5px; top: 7px; }
.smear { position: absolute; }
.smear.s { left: 35px; top: 10px; width: 47px; height: 7px; background: #f8efe3; }
.smear.y { left: 28px; top: 9px; width: 95px; height: 8px; background: #fdf1dd; }
.smear.l { left: 28px; top: 11px; width: 95px; height: 6px; background: #f1eee2; }
.smear.d { left: 28px; top: 1px; width: 141px; height: 14px; background: linear-gradient(#f3f2df, #fff6df); }
q { quotes: none; font-family: Roboto, sans-serif; font-size: 8.500px; }
.skill { height: 39px; margin: 21px 1px 0; border: 1px solid #f5f6ef; }
.skill span { display: block; width: 30px; margin: -7px 15px 0 0; line-height: 14px; background: #fffff8; font-size: 9px; color: #444; }
.dchev { position: absolute; left: 3px; top: 9px; width: 7px; height: 5px; }
.area { position: relative; height: 86px; border: 1px solid #aeb4aa; border-radius: 2px; background: #fffffa; padding: 3px 4px; line-height: 14px; }
.area span { border-left: 1px solid #333; }
.ibeam { position: absolute; left: 158px; top: 27px; width: 6px; height: 13px; }
.grip { position: absolute; left: 0; bottom: 0; width: 7px; height: 7px; }
.submit { height: 20px; margin-top: 10.500px; border-radius: 2px; background: #34a0ff; }

/* Remote taskbar */
.w8bar { height: 29px; flex: none; background: linear-gradient(#b8907c 0 4px, #d0755a 4px 5px, transparent 5px), linear-gradient(90deg, #643825, #6d4028 25%, #5a382b 34%, #703f28 45%, #75401f 75%, #80502c); display: flex; color: #fff; }
.w8 { width: 45.500px; height: 29px; display: flex; align-items: center; justify-content: center; flex: none; padding-top: 1px; }
.w8 svg { width: 22px; height: 22px; }
.w8.start { width: 34px; }
.w8.start svg { width: 19px; height: 19px; }
.w8.start + .w8 { margin-left: 1px; }
.w8.open { background: rgba(255,255,255,.25); border: 1px solid rgba(255,255,255,.4); width: 43px; margin: 0 1px; }
.w8.on { background: rgba(255,255,255,.45); }
.w8.grp { width: 42px; padding-right: 4px; }
.w8tray { margin-left: auto; display: flex; align-items: center; padding-right: 11px; font-size: 8.500px; }
.up { width: 5px; height: 4px; margin-right: 11px; }
.snd { width: 11px; height: 11px; margin-right: 7px; }
.bat { width: 11px; height: 12px; margin-right: 13px; }
.lang, .clk { display: flex; flex-direction: column; align-items: center; line-height: 12px; }
.lang { width: 12px; margin-right: 13px; }
.clk { width: 40px; letter-spacing: -.2px; font-size: 8.300px; }

/* Task bars */
.bar { position: relative; display: flex; align-items: stretch; color: #fff; flex: none; }
.bar > div { flex: none; }
.b-start { background: #020209; display: flex; align-items: center; justify-content: center; }
.b-start svg { width: 16px; height: 16px; }
.b-search { background: #333; display: flex; align-items: center; color: #a0a0a0; }
.ring { border: 3px solid #f2f2f2; border-radius: 50%; flex: none; }
.b-search svg { margin-left: auto; }
.b-task { display: flex; align-items: center; justify-content: center; position: relative; }
.b-apps { display: flex; position: relative; }
.b-apps > div { display: flex; align-items: center; justify-content: center; position: relative; }
.b-apps::after { content: ""; position: absolute; border-top: 1px dashed #080708; z-index: -1; }
.run::after { content: ""; position: absolute; left: 4px; right: 5px; bottom: 0; height: 2px; background: #76b9ed; }
.run.multi::after { background: linear-gradient(90deg, #76b9ed 32px, #48779c 32px); }
.run.active { background: #575355; }
.run.active::after { left: 0; right: 0; }
.b-ghost { position: absolute; height: 100%; background: #1c231b; border: solid #02040a; border-width: 0 8px; color: #050705; }
.b-ghost span { position: absolute; line-height: 24px; }
.b-tray { background: #1c211c; display: flex; align-items: center; margin-left: auto; }
.t-clk { display: flex; flex-direction: column; align-items: center; white-space: nowrap; }
.t-up { width: 12px; height: 7px; margin-right: 10px; }
.t-snd { width: 16px; height: 14px; margin-right: 8px; }
.t-net { width: 17px; height: 14px; margin-right: 16px; }
.t-fa { font-size: 11px; width: 10px; }
.t-chat { width: 16px; height: 16px; margin-left: 17px; }

.outer { height: 40px; background: #231d1e; }
.outer .b-start { width: 48px; }
.outer .b-search { width: 344px; padding: 0 14px 0 9px; font-size: 14px; }
.outer .b-search span { margin-left: 5px; letter-spacing: -.05px; }
.outer .ring { width: 22px; height: 22px; }
.outer .b-search svg { width: 12px; height: 18px; }
.outer .b-task { width: 50px; padding-right: 2px; }
.outer .b-task svg { width: 20px; height: 14px; }
.outer .b-apps > div { width: 49px; }
.outer .b-apps svg { width: 24px; height: 24px; }
.outer .b-apps > .active { width: 48px; }
.outer .b-apps { z-index: 0; }
.outer .b-apps::after { left: 528px; top: 15px; width: 132px; }
.outer .b-ghost { left: 546px; width: 272px; font-size: 18px; }
.outer .g-a { left: 66px; top: 2px; font-size: 17px; }
.outer .g-b { left: 121px; top: 2px; }
.outer .g-c { left: 133px; top: 2px; }
.outer .g-d { left: 146px; top: 2px; }
.outer .b-tray { width: 264px; border-right: 5px solid #15171a; padding-left: 39px; }
.outer .t-clk { width: 60px; margin-left: 18px; font-size: 11.500px; line-height: 18px; letter-spacing: -.25px; padding-bottom: 1px; }

.inner { height: 31px; background: linear-gradient(#222 0 6px, #3a1a1e 6px 7px, #231d1e 7px); overflow: hidden; }
.inner > div { margin-top: 7px; height: 24px; }
.inner .b-start { width: 44px; }
.inner .b-search { width: 317px; margin-top: 1px; height: 30px; padding: 6px 13px 0 8px; font-size: 13px; }
.inner .b-search span { margin-left: 5px; letter-spacing: -.1px; }
.inner .ring { width: 20px; height: 20px; }
.inner .b-search svg { width: 11px; height: 16px; }
.inner .b-task { width: 46px; padding-right: 1px; }
.inner .b-task svg { width: 19px; height: 14px; }
.inner .b-apps > div { width: 45.300px; }
.inner .b-apps svg { width: 22px; height: 22px; }
.inner .b-apps { z-index: 0; }
.inner .b-apps::after { left: 488px; top: 7px; width: 122px; }
.inner .b-ghost { left: 504px; width: 250px; font-size: 15.500px; border-right: 0; border-left-width: 7px; }
.inner .g-a { left: 66px; top: -4px; }
.inner .g-b { left: 118px; top: -4px; }
.inner .g-c { left: 129px; top: -4px; }
.inner .g-d { left: 139px; top: -4px; }
.inner .b-tray { width: 243px; margin-top: 2px; height: 29px; padding: 4px 0 0 35px; border-right: 2px solid #40464b; }
.inner .t-snd { margin-right: 7px; width: 15px; }
.inner .t-net { width: 16px; margin-right: 14px; }
.inner .t-clk { width: 54px; margin-left: 18px; font-size: 10.500px; line-height: 15.500px; letter-spacing: -.3px; padding-bottom: 1px; }
.inner .t-chat { margin-left: 16px; width: 15px; height: 15px; }
```
